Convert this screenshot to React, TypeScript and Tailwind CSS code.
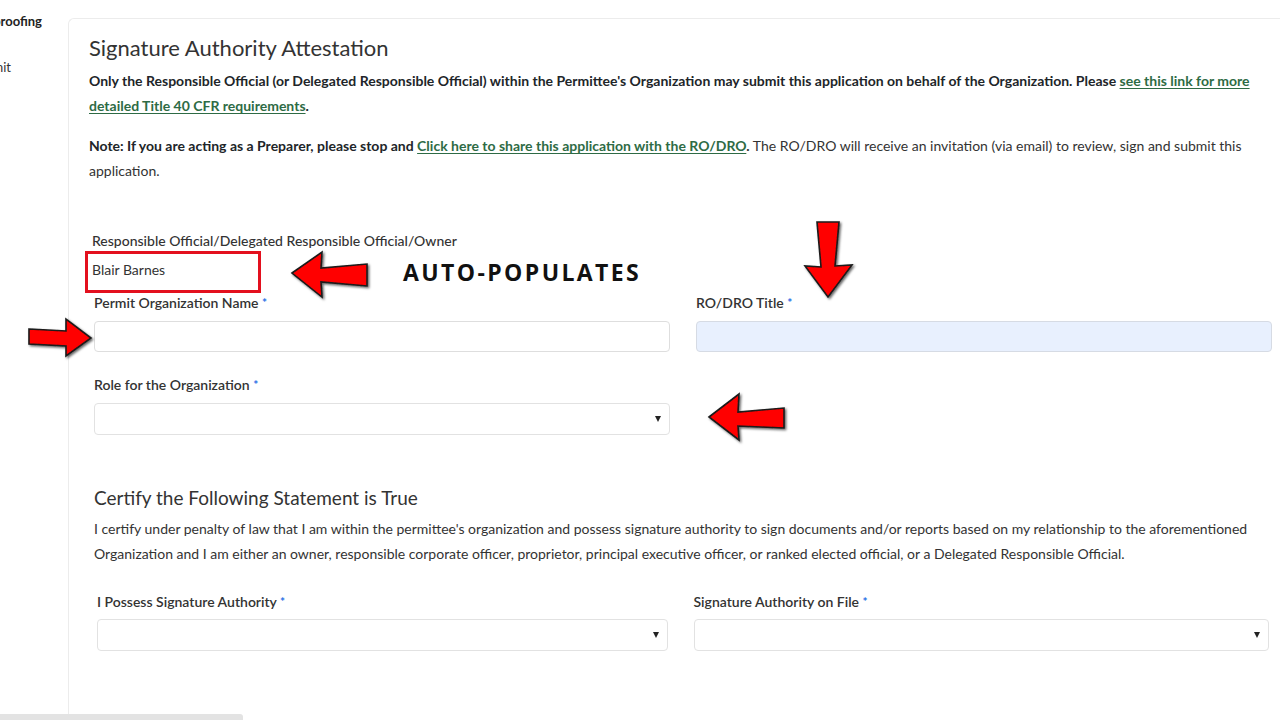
import React from "react";

function Label({ children, className = "" }: { children: React.ReactNode; className?: string }) {
  return (
    <div className={`text-[14px] leading-[20px] font-semibold text-[#333] ${className}`}>
      {children} <span className="text-[#1f6fe5] font-bold align-top text-[12px]">*</span>
    </div>
  );
}

function SelectBox({ className = "" }: { className?: string }) {
  return (
    <div
      className={`h-[32px] rounded-[4px] border border-[#e2e2e2] bg-white flex items-center justify-end pr-[8px] ${className}`}
    >
      <span className="block w-0 h-0 border-l-[3.5px] border-r-[3.5px] border-t-[6px] border-l-transparent border-r-transparent border-t-[#222]" />
    </div>
  );
}

function Arrows() {
  const style = { fill: "#ff0000", stroke: "#1a1a1a", strokeWidth: 1.6, strokeLinejoin: "miter" as const };
  return (
    <svg className="absolute inset-0 pointer-events-none" width="1280" height="720" viewBox="0 0 1280 720">
      <defs>
        <filter id="sh" x="-20%" y="-20%" width="140%" height="140%">
          <feDropShadow dx="1.5" dy="1.5" stdDeviation="0.8" floodColor="#000" floodOpacity="0.6" />
        </filter>
      </defs>
      <polygon filter="url(#sh)" style={style} points="292,273 322,252 321,268 367,264 367,286 321,282 322,297" />
      <polygon filter="url(#sh)" style={style} points="29,329 66,331 66,319 91,338 66,356 66,346 29,344" />
      <polygon filter="url(#sh)" style={style} points="817,222 839,222 835,266 852,265 828,297 805,266 821,267" />
      <polygon filter="url(#sh)" style={style} points="709,417 739,394 738,412 784,408 784,428 738,426 739,440" />
    </svg>
  );
}

export default function App() {
  return (
    <div
      className="relative w-[1280px] h-[720px] overflow-hidden bg-white text-[#212529]"
      style={{ fontFamily: "Lato, 'Open Sans', sans-serif" }}
    >
      <div className="flex h-full">
        {/* sidebar, cut off at the left */}
        <aside className="w-[68px] shrink-0 overflow-hidden pt-[12px]">
          <div className="flex justify-end pr-[26px] whitespace-nowrap text-[13px] leading-[18px] font-bold text-[#222]">
            Waterproofing
          </div>
          <div className="mt-[28px] flex justify-end pr-[57px] whitespace-nowrap text-[13px] leading-[18px] text-[#333]">
            Submit Permit
          </div>
        </aside>

        {/* main card */}
        <main className="flex-1 mt-[18px] border-l border-t border-[#ececec] rounded-tl-[6px] pl-[20px] pr-[8px] pt-[15px]">
          <h1 className="text-[22px] leading-[28px] font-normal text-[#333]">Signature Authority Attestation</h1>

          <p className="mt-[6px] text-[14px] leading-[25px] font-bold text-[#212529] pr-[8px]">
            Only the Responsible Official (or Delegated Responsible Official) within the Permittee's Organization may
            submit this application on behalf of the Organization. Please{" "}
            <a className="text-[#2e6b45] underline underline-offset-2">see this link for more detailed Title 40 CFR requirements</a>
            .
          </p>

          <p className="mt-[15px] text-[14px] leading-[25px] text-[#333] pr-[20px]">
            <span className="font-bold text-[#212529]">Note: If you are acting as a Preparer, please stop and </span>
            <a className="font-bold text-[#2e6b45] underline underline-offset-2">Click here to share this application with the RO/DRO</a>
            <span className="font-bold">.</span> The RO/DRO will receive an invitation (via email) to review, sign and submit
            this application.
          </p>

          {/* form block */}
          <div className="mt-[48px] pl-[3px]">
            <div className="text-[14px] leading-[20px] font-medium text-[#333]">
              Responsible Official/Delegated Responsible Official/Owner
            </div>
            <div className="-ml-[7px] w-[176px] h-[42px] border-[3px] border-[#e3101e] pl-[4px] pt-[6px] text-[14px] leading-[20px] text-[#333]">
              Blair Barnes
            </div>

            <div className="grid grid-cols-2 gap-x-[26px] pl-[2px]">
              <div>
                <Label>Permit Organization Name</Label>
                <div className="mt-[8px] h-[31px] rounded-[4px] border border-[#dedede] bg-white" />
              </div>
              <div>
                <Label>RO/DRO Title</Label>
                <div className="mt-[8px] h-[31px] rounded-[4px] border border-[#d6dbe4] bg-[#e8f0fe]" />
              </div>
            </div>

            <div className="grid grid-cols-2 gap-x-[26px] pl-[2px] mt-[23px]">
              <div>
                <Label>Role for the Organization</Label>
                <SelectBox className="mt-[8px]" />
              </div>
              <div />
            </div>

            <h2 className="mt-[50px] pl-[2px] text-[19px] leading-[26px] font-normal text-[#333]">
              Certify the Following Statement is True
            </h2>
            <p className="mt-[5px] pl-[2px] text-[14px] leading-[25px] text-[#333]">
              I certify under penalty of law that I am within the permittee's organization and possess signature authority
              to sign documents and/or reports based on my relationship to the aforementioned Organization and I am either
              an owner, responsible corporate officer, proprietor, principal executive officer, or ranked elected official,
              or a Delegated Responsible Official.
            </p>

            <div className="grid grid-cols-2 gap-x-[26px] mt-[26px] pr-[3px]">
              <div className="pl-[5px]">
                <Label>I Possess Signature Authority</Label>
                <SelectBox className="mt-[7px]" />
              </div>
              <div>
                <Label>Signature Authority on File</Label>
                <SelectBox className="mt-[7px]" />
              </div>
            </div>
          </div>
        </main>
      </div>

      {/* annotation overlay */}
      <div
        className="absolute left-[403px] top-[257px] text-[23px] leading-[30px] font-bold tracking-[2.4px] text-[#111]"
        style={{ fontFamily: "'Open Sans', sans-serif" }}
      >
        AUTO-POPULATES
      </div>
      <Arrows />

      {/* horizontal scrollbar remnant */}
      <div className="absolute left-0 bottom-0 w-[243px] h-[6px] bg-[#e3e3e3] rounded-tr-[3px]" />
    </div>
  );
}
